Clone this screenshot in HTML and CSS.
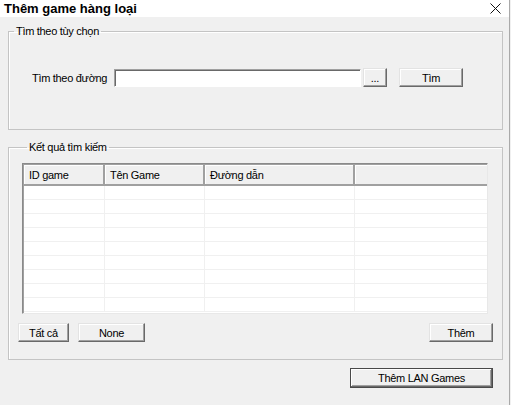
FILE: index.html
```html
<!DOCTYPE html>
<html lang="vi">
<head>
    <meta charset="UTF-8">
    <title>Thêm game hàng loại</title>
    <link rel="stylesheet" href="styles.css">
</head>
<body>
    <div class="window">
        <div class="titlebar">
            <span class="title">Thêm game hàng loại</span>
            <svg class="close" width="11" height="11" viewBox="0 0 11 11">
                <path d="M0.5 0.5 L10.5 10.5 M10.5 0.5 L0.5 10.5" stroke="#111" stroke-width="1" fill="none"/>
            </svg>
        </div>
        <div class="body">
            <fieldset class="group group-search">
                <legend>Tìm theo tùy chọn</legend>
                <div class="search-row">
                    <label class="search-label">Tìm theo đường</label>
                    <input type="text" class="textbox">
                    <button class="btn btn-browse">...</button>
                    <button class="btn btn-find">Tìm</button>
                </div>
            </fieldset>

            <fieldset class="group group-result">
                <legend>Kết quả tìm kiếm</legend>
                <div class="listview">
                    <div class="lv-header">
                        <div class="col c1">ID game</div>
                        <div class="col c2">Tên Game</div>
                        <div class="col c3">Đường dẫn</div>
                        <div class="col c4"></div>
                    </div>
                    <div class="lv-rows" id="rows"></div>
                </div>
                <div class="result-actions">
                    <button class="btn btn-all">Tất cả</button>
                    <button class="btn btn-none">None</button>
                    <span class="spacer"></span>
                    <button class="btn btn-add">Thêm</button>
                </div>
            </fieldset>

            <div class="footer">
                <button class="btn btn-default btn-lan">Thêm LAN Games</button>
            </div>
        </div>
    </div>

    <script>
        var rows = document.getElementById("rows");
        for (var i = 0; i < 9; i++) {
            var row = document.createElement("div");
            row.className = "lv-row";
            for (var j = 1; j <= 4; j++) {
                var cell = document.createElement("div");
                cell.className = "cell c" + j;
                row.appendChild(cell);
            }
            rows.appendChild(row);
        }
    </script>
</body>
</html>
```

FILE: styles.css
```css
html, body {
    margin: 0;
    padding: 0;
    background: #f0f0f0;
}
body {
    font-family: "Liberation Sans", Arial, sans-serif;
    font-size: 11px;
    letter-spacing: -0.3px;
    color: #000;
    width: 511px;
    height: 405px;
    overflow: hidden;
}
.window {
    width: 509px;
    height: 405px;
    border-right: 1px solid #a9a9a9;
}
.titlebar {
    height: 17px;
    background: #fff;
    display: flex;
    align-items: center;
    padding: 0 8px 0 4px;
}
.title {
    font-weight: bold;
    font-size: 13px;
    letter-spacing: 0;
    flex: 1;
}
.body {
    padding: 0 6px 0 8px;
}

/* group boxes */
.group {
    margin: 0;
    padding: 0;
    min-width: 0;
    border: 1px solid #c4c4c4;
    box-shadow: inset 1px 1px 0 #fff;
}
.group legend {
    margin-left: 5px;
    padding: 0 2px;
    line-height: 14px;
}
.group-search {
    margin-top: 7px;
    padding: 30px 0 42px 0;
}
.group-result {
    margin-top: 10px;
    padding: 9px 14px 17px 13px;
}

/* search row */
.search-row {
    display: flex;
    align-items: center;
    height: 19px;
}
.search-label {
    width: 82px;
    padding-left: 23px;
}
.textbox {
    margin: 0;
    width: 247px;
    height: 18px;
    box-sizing: border-box;
    padding: 0;
    background: #fff;
    border: 1px solid;
    border-color: #a0a0a0 #fff #fff #a0a0a0;
    box-shadow: inset 1px 1px 0 #696969;
    outline: none;
}

/* buttons */
.btn {
    font-family: inherit;
    font-size: 11px;
    letter-spacing: inherit;
    color: #000;
    background: #f0f0f0;
    height: 19px;
    padding: 0;
    box-sizing: border-box;
    border: 1px solid;
    border-color: #e3e3e3 #696969 #696969 #e3e3e3;
    box-shadow: inset -1px -1px 0 #a0a0a0, inset 1px 1px 0 #fff;
}
.btn-browse {
    width: 24px;
    margin-left: 2px;
}
.btn-find {
    width: 64px;
    margin-left: 12px;
}
.btn-all { width: 51px; margin-left: -4px; }
.btn-none { width: 67px; margin-left: 9px; }
.btn-add { width: 64px; margin-right: -5px; }
.btn-default {
    border: 1px solid #4a4a4a;
    box-shadow: inset -1px -1px 0 #696969, inset 1px 1px 0 #fff, inset -2px -2px 0 #a0a0a0;
}

/* list view */
.listview {
    height: 151px;
    box-sizing: border-box;
    background: #fff;
    border: 1px solid;
    border-color: #8a8a8a #e8e8e8 #e8e8e8 #8a8a8a;
    box-shadow: inset 1px 1px 0 #a0a0a0;
    overflow: hidden;
}
.lv-header {
    display: flex;
    height: 21px;
    background: #f0f0f0;
    border-bottom: 2px solid #a0a0a0;
    box-sizing: border-box;
    margin: 1px 0 0 1px;
}
.lv-header .col {
    box-sizing: border-box;
    padding: 4px 0 0 5px;
    border-right: 2px solid #a0a0a0;
    box-shadow: inset 1px 1px 0 #fff;
}
.lv-header .c4 {
    border-right: none;
}
.c1 { width: 81px; }
.c2 { width: 100px; }
.c3 { width: 150px; }
.c4 { flex: 1; }
.lv-row {
    display: flex;
    height: 14px;
    margin-left: 1px;
}
.cell {
    box-sizing: border-box;
    border-right: 1px solid #f0f0f0;
    border-bottom: 1px solid #f0f0f0;
}
.lv-row .c4 {
    border-right: none;
}

.result-actions {
    display: flex;
    margin-top: 9px;
}
.spacer { flex: 1; }

.footer {
    display: flex;
    justify-content: flex-end;
    padding: 8px 10px 0 0;
}
.btn-lan {
    width: 143px;
    height: 20px;
}
```
